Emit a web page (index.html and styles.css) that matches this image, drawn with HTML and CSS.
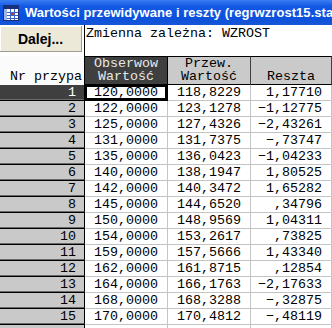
FILE: index.html
```html
<!DOCTYPE html>
<html lang="pl">
<head>
<meta charset="utf-8">
<title>Wartości przewidywane i reszty</title>
<link rel="stylesheet" href="styles.css">
</head>
<body>
<div class="win">
  <div class="title">
    <svg class="icon" width="16" height="16" viewBox="0 0 16 16">
      <rect x="0.5" y="0.5" width="15" height="15" fill="#fff" stroke="#1a2f7a"/>
      <rect x="1" y="1" width="14" height="3" fill="#1a2f7a"/>
      <rect x="1" y="4" width="3" height="11" fill="#9fb4e8"/>
      <path d="M4 7.5H15M4 10.5H15M4 13.5H15M7.5 4V15M11.5 4V15" stroke="#3b62c8" stroke-width="1"/>
      <rect x="8" y="8" width="3" height="2" fill="#d04020"/>
    </svg>
    <span class="title-text">Wartości przewidywane i reszty (regrwzrost15.sta)</span>
  </div>
  <div class="sheet">
    <div class="corner"><button class="btn">Dalej...</button></div>
    <div class="info">Zmienna zależna: WZROST</div>

    <div class="rowhead-title">Nr przypa</div>
    <div class="colhead sel"><span>Obserwow</span><span>Wartość</span></div>
    <div class="colhead"><span>Przew.</span><span>Wartość</span></div>
    <div class="colhead"><span>Reszta</span></div>

    <div class="rh sel">1</div><div class="c focus">120,0000</div><div class="c">118,8229</div><div class="c">1,17710</div>
    <div class="rh">2</div><div class="c">122,0000</div><div class="c">123,1278</div><div class="c">−1,12775</div>
    <div class="rh">3</div><div class="c">125,0000</div><div class="c">127,4326</div><div class="c">−2,43261</div>
    <div class="rh">4</div><div class="c">131,0000</div><div class="c">131,7375</div><div class="c">−,73747</div>
    <div class="rh">5</div><div class="c">135,0000</div><div class="c">136,0423</div><div class="c">−1,04233</div>
    <div class="rh">6</div><div class="c">140,0000</div><div class="c">138,1947</div><div class="c">1,80525</div>
    <div class="rh">7</div><div class="c">142,0000</div><div class="c">140,3472</div><div class="c">1,65282</div>
    <div class="rh">8</div><div class="c">145,0000</div><div class="c">144,6520</div><div class="c">,34796</div>
    <div class="rh">9</div><div class="c">150,0000</div><div class="c">148,9569</div><div class="c">1,04311</div>
    <div class="rh">10</div><div class="c">154,0000</div><div class="c">153,2617</div><div class="c">,73825</div>
    <div class="rh">11</div><div class="c">159,0000</div><div class="c">157,5666</div><div class="c">1,43340</div>
    <div class="rh">12</div><div class="c">162,0000</div><div class="c">161,8715</div><div class="c">,12854</div>
    <div class="rh">13</div><div class="c">164,0000</div><div class="c">166,1763</div><div class="c">−2,17633</div>
    <div class="rh">14</div><div class="c">168,0000</div><div class="c">168,3288</div><div class="c">−,32875</div>
    <div class="rh">15</div><div class="c">170,0000</div><div class="c">170,4812</div><div class="c">−,48119</div>
    <div class="rh"></div><div class="c"></div><div class="c"></div><div class="c"></div>
  </div>
</div>
</body>
</html>
```
FILE: styles.css
```css
* {
  box-sizing: border-box;
  margin: 0;
  padding: 0;
}

body {
  margin: 0;
  background: #fff;
}

.win {
  width: 332px;
  height: 328px;
  overflow: hidden;
  background: #fff;
  font-family: "Liberation Mono", "Courier New", monospace;
  font-size: 13.33px;
  color: #000;
}

.title {
  height: 25px;
  display: flex;
  align-items: center;
  gap: 6px;
  padding-left: 3px;
  background: linear-gradient(#3a7df2 0%, #1459e4 25%, #0b50dc 70%, #1756d6 100%);
  color: #fff;
  font-family: "Liberation Sans", Arial, sans-serif;
  font-weight: bold;
  font-size: 13px;
  letter-spacing: 0.05px;
  white-space: nowrap;
  overflow: hidden;
}

.icon {
  flex: none;
}

.sheet {
  display: grid;
  grid-template-columns: 85px 83px 83px 81px;
  grid-template-rows: 31px 29px repeat(16, 16px);
}

.corner {
  border-right: 1px solid #000;
  padding-top: 1px;
}

.btn {
  display: block;
  width: 82px;
  height: 26px;
  background: #ece9d8;
  border: none;
  border-right: 1px solid #a09d90;
  border-bottom: 1px solid #a09d90;
  box-shadow: inset 1px 1px 0 #fff;
  font-family: "Liberation Sans", Arial, sans-serif;
  font-weight: bold;
  font-size: 14px;
  color: #000;
}

.info {
  grid-column: 2 / 5;
  padding: 2px 0 0 1px;
  line-height: 13px;
  white-space: nowrap;
}

.rowhead-title {
  border-right: 1px solid #000;
  display: flex;
  align-items: flex-end;
  justify-content: flex-end;
  padding: 0 2px 2px 0;
  line-height: 13px;
  white-space: nowrap;
  background: #fbfbfb;
}

.colhead {
  display: flex;
  flex-direction: column;
  justify-content: flex-end;
  align-items: center;
  text-align: center;
  line-height: 13px;
  padding-bottom: 1px;
  background: #cacaca;
  border-top: 1px solid #000;
  border-right: 1px solid #404040;
  border-bottom: 1px solid #000;
  white-space: nowrap;
}

.colhead.sel {
  background: #3f3f3f;
  color: #e8e8e8;
  border-right-color: #000;
}

.rh {
  background: #c9c9c9;
  border-right: 1px solid #000;
  border-bottom: 1px solid #000;
  box-shadow: inset 0 -1px 0 #6a6a6a;
  text-align: right;
  padding-right: 8px;
  line-height: 15px;
}

.rh.sel {
  background: #3f3f3f;
  color: #fff;
}

.c {
  border-right: 1px solid #c4c4c4;
  border-bottom: 1px solid #c4c4c4;
  text-align: right;
  padding-right: 9px;
  line-height: 15px;
  white-space: nowrap;
}

.c.focus {
  box-shadow: inset 0 0 0 2px #000;
  border-color: #000;
}
```
